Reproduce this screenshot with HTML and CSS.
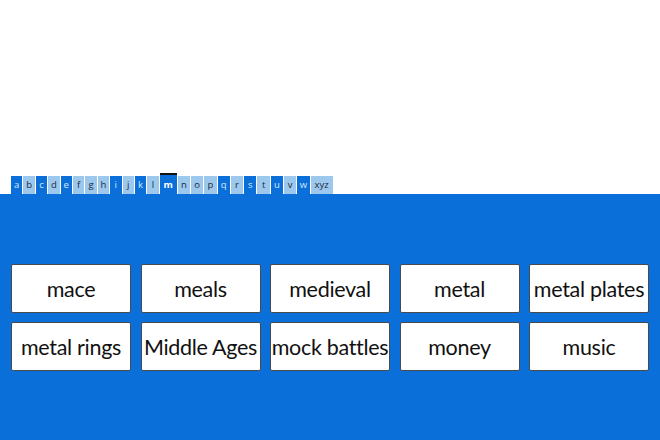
FILE: index.html
```html
<!DOCTYPE html>
<html>
<head>
<meta charset="utf-8">
<link rel="stylesheet" href="styles.css">
</head>
<body>
<div class="top">
  <nav class="tabs">
    <span class="tab dark">a</span>
    <span class="tab light">b</span>
    <span class="tab dark">c</span>
    <span class="tab light">d</span>
    <span class="tab dark">e</span>
    <span class="tab light">f</span>
    <span class="tab light">g</span>
    <span class="tab light">h</span>
    <span class="tab dark">i</span>
    <span class="tab light">j</span>
    <span class="tab dark">k</span>
    <span class="tab light">l</span>
    <span class="tab active">m</span>
    <span class="tab light late">n</span>
    <span class="tab light late">o</span>
    <span class="tab light late">p</span>
    <span class="tab dark late">q</span>
    <span class="tab light late">r</span>
    <span class="tab dark late">s</span>
    <span class="tab light late">t</span>
    <span class="tab dark late">u</span>
    <span class="tab light late">v</span>
    <span class="tab dark late">w</span>
    <span class="tab light wide">xyz</span>
  </nav>
</div>
<main class="panel">
  <div class="grid">
    <div class="card">mace</div>
    <div class="card">meals</div>
    <div class="card">medieval</div>
    <div class="card">metal</div>
    <div class="card">metal plates</div>
    <div class="card">metal rings</div>
    <div class="card">Middle Ages</div>
    <div class="card">mock battles</div>
    <div class="card">money</div>
    <div class="card">music</div>
  </div>
</main>
</body>
</html>
```
FILE: styles.css
```css
html, body {
  margin: 0;
  padding: 0;
  background: #ffffff;
}
body {
  width: 660px;
  height: 440px;
  overflow: hidden;
  font-family: "Open Sans", "Liberation Sans", sans-serif;
}
.top {
  height: 194px;
  display: flex;
  align-items: flex-end;
  padding-left: 11px;
  box-sizing: border-box;
}
.tabs {
  display: flex;
  align-items: flex-end;
  gap: 1px;
}
.tab {
  height: 18px;
  width: 11.4px;
  box-sizing: border-box;
  display: flex;
  align-items: center;
  justify-content: center;
  font-size: 9.5px;
  line-height: 1;
}
.tab.late {
  width: 12.3px;
}
.tab.dark {
  background: #0a6fd8;
  color: #dbe9f8;
}
.tab.light {
  background: #9dc8ee;
  color: #1d2a3a;
}
.tab.active {
  height: 21px;
  width: 17px;
  background: #0a6fd8;
  color: #ffffff;
  font-weight: 700;
  border-top: 2px solid #111111;
  padding-top: 1px;
}
.tab.wide {
  width: 22px;
}
.panel {
  height: 246px;
  background: #0a6fd8;
  padding: 70px 11px 0;
  box-sizing: border-box;
}
.grid {
  display: grid;
  grid-template-columns: repeat(5, 120px);
  grid-auto-rows: 49px;
  column-gap: 9.5px;
  row-gap: 9px;
}
.card {
  background: #ffffff;
  border: 1px solid #4a4a4a;
  border-radius: 2px;
  box-sizing: border-box;
  display: flex;
  align-items: center;
  justify-content: center;
  font-family: Lato, "Open Sans", sans-serif;
  font-size: 21.5px;
  letter-spacing: -0.3px;
  color: #111111;
  white-space: nowrap;
  overflow: hidden;
}
```
